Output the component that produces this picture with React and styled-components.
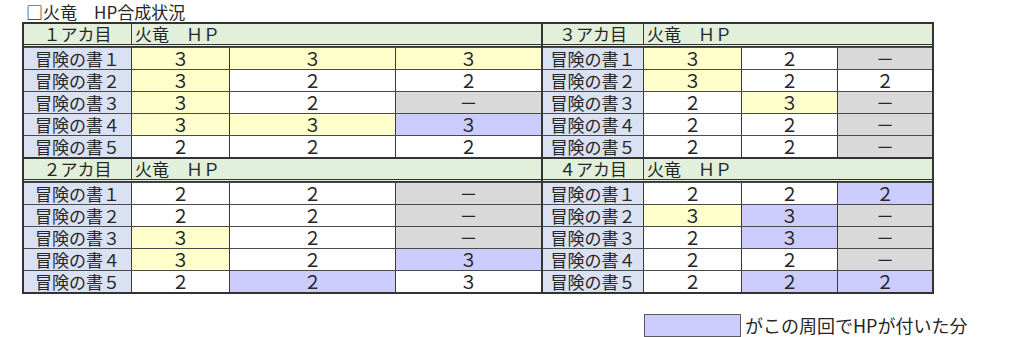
import React from "react";
import styled, { createGlobalStyle } from "styled-components";

const Global = createGlobalStyle`
  html, body { margin: 0; padding: 0; background: #ffffff; }
  body { font-family: "Noto Sans CJK JP", "Noto Sans", sans-serif; color: #262626; }
`;

const Page = styled.div`
  width: 1024px;
  height: 337px;
  box-sizing: border-box;
  padding: 2px 0 0 22px;
  display: flex;
  flex-direction: column;
  overflow: hidden;
`;

const Title = styled.div`
  height: 20px;
  line-height: 20px;
  font-size: 17px;
  padding-left: 4px;
  white-space: pre;
`;

const Table = styled.div`
  display: flex;
  width: max-content;
  border: 2px solid #333333;
`;

const Half = styled.div`
  display: flex;
  flex-direction: column;
  & + & { border-left: 2px solid #333333; }
`;

const Block = styled.div`
  display: flex;
  flex-direction: column;
  & + & { border-top: 2px solid #333333; }
`;

const Row = styled.div`
  display: grid;
  grid-template-columns: ${(p) => p.$cols};
  font-size: 17px;
  & + & { border-top: 1px solid #4a4a4a; }
`;

const HeadRow = styled(Row)`
  height: 23px;
  box-sizing: border-box;
  background: #e2efda;
  border-bottom: 3px double #333333;
`;

const Cell = styled.div`
  box-sizing: border-box;
  height: 21px;
  line-height: 21px;
  text-align: center;
  white-space: pre;
  & + & { border-left: 1px solid #3a3a3a; }
`;

const HeadLabel = styled(Cell)`
  height: 20px;
  line-height: 20px;
`;

const HeadTitle = styled(Cell)`
  height: 20px;
  line-height: 20px;
  grid-column: 2 / -1;
  text-align: left;
  padding-left: 3px;
`;

const Label = styled(Cell)`
  background: #d9e1f2;
`;

const tones = {
  w: "#ffffff",
  y: "#ffffcc",
  p: "#ccccff",
  g: "#d9d9d9",
};

const Value = styled(Cell)`
  background: ${(p) => tones[p.$tone]};
  font-size: 18px;
`;

const Spacer = styled.div`
  height: 21px;
`;

const Legend = styled.div`
  display: flex;
  align-items: center;
  gap: 4px;
  padding-left: 622px;
`;

const Swatch = styled.div`
  width: 97px;
  height: 23px;
  box-sizing: border-box;
  background: #ccccff;
  border: 1px solid #5a5a5a;
`;

const LegendText = styled.span`
  font-size: 18px;
  line-height: 23px;
  white-space: nowrap;
`;

const LEFT = "107px 98px 166px 146px";
const RIGHT = "100px 98px 96px 95px";

const glyph = { "2": "２", "3": "３", "-": "－" };

const parse = (s) =>
  s.split(" ").map((t) => ({ v: glyph[t[0]], tone: t[1] }));

const blocks = {
  a1: {
    name: "１アカ目",
    rows: ["3y 3y 3y", "3y 2w 2w", "3y 2w -g", "3y 3y 3p", "2w 2w 2w"],
  },
  a2: {
    name: "２アカ目",
    rows: ["2w 2w -g", "2w 2w -g", "3y 2w -g", "3y 2w 3p", "2w 2p 3w"],
  },
  a3: {
    name: "３アカ目",
    rows: ["3y 2w -g", "3y 2w 2w", "2w 3y -g", "2w 2w -g", "2w 2w -g"],
  },
  a4: {
    name: "４アカ目",
    rows: ["2w 2w 2p", "3y 3p -g", "2w 3p -g", "2w 2w -g", "2w 2p 2p"],
  },
};

const labels = ["冒険の書１", "冒険の書２", "冒険の書３", "冒険の書４", "冒険の書５"];

function HpBlock({ data, cols }) {
  return (
    <Block>
      <HeadRow $cols={cols}>
        <HeadLabel>{data.name}</HeadLabel>
        <HeadTitle>{"火竜　ＨＰ"}</HeadTitle>
      </HeadRow>
      {data.rows.map((r, i) => (
        <Row key={i} $cols={cols}>
          <Label>{labels[i]}</Label>
          {parse(r).map((c, j) => (
            <Value key={j} $tone={c.tone}>
              {c.v}
            </Value>
          ))}
        </Row>
      ))}
    </Block>
  );
}

export default function App() {
  return (
    <>
      <Global />
      <Page>
        <Title>{"□火竜　HP合成状況"}</Title>
        <Table>
          <Half>
            <HpBlock data={blocks.a1} cols={LEFT} />
            <HpBlock data={blocks.a2} cols={LEFT} />
          </Half>
          <Half>
            <HpBlock data={blocks.a3} cols={RIGHT} />
            <HpBlock data={blocks.a4} cols={RIGHT} />
          </Half>
        </Table>
        <Spacer />
        <Legend>
          <Swatch />
          <LegendText>がこの周回でHPが付いた分</LegendText>
        </Legend>
      </Page>
    </>
  );
}
